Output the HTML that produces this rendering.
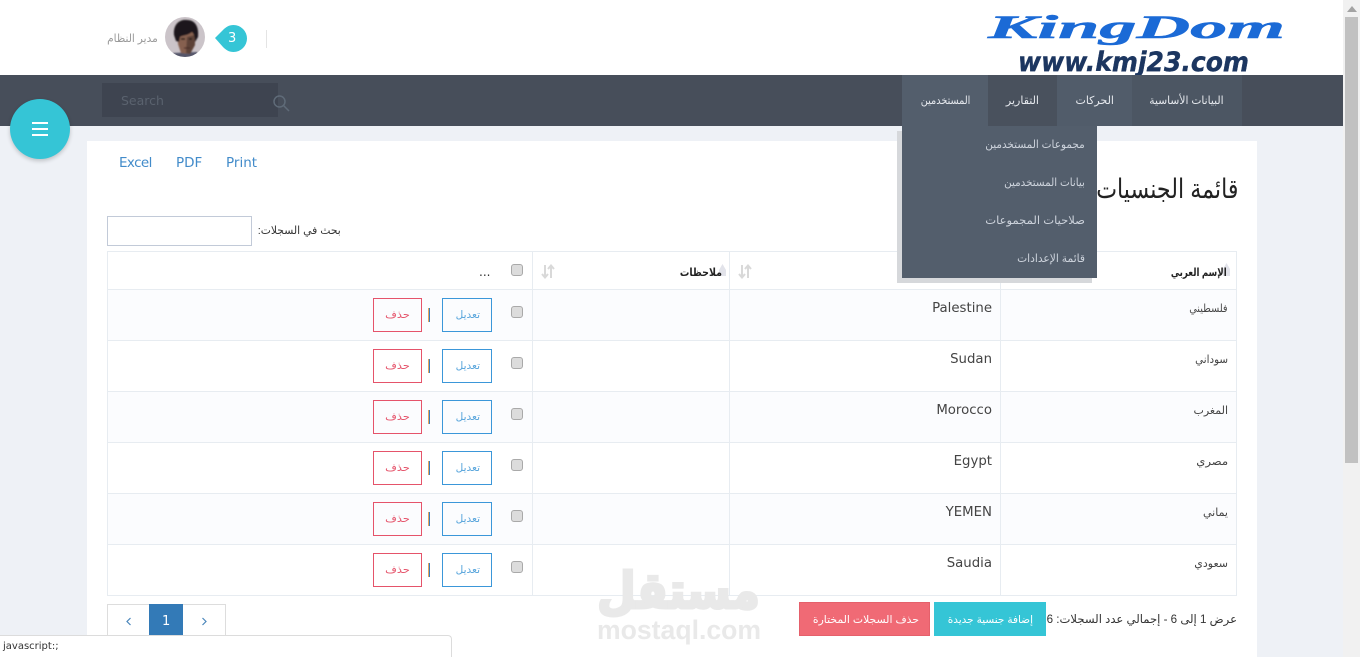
<!DOCTYPE html>
<html lang="ar"><head><meta charset="utf-8"><title>قائمة الجنسيات</title>
<style>
html,body{margin:0;padding:0;width:1360px;height:657px;overflow:hidden;background:#eef1f6;font-family:"Liberation Sans","DejaVu Sans",sans-serif}
div,span,a,svg{position:absolute;box-sizing:border-box}
#root{left:0;top:0;width:1360px;height:657px;overflow:hidden}
.t{white-space:nowrap;direction:rtl;transform-origin:right center;line-height:16px;text-decoration:none}
.l{white-space:nowrap;line-height:18px;font-family:"DejaVu Sans",sans-serif}
.nav{top:75px;height:51px}
.nt{color:#e6e9ee;font-size:11px;top:93px}
.dt{color:#cdd3dc;font-size:11px}
.row{left:107px;width:1130px;height:51px;border-bottom:1px solid #e7ecf1}
.v{top:251px;width:1px;height:345px;background:#e7ecf1}
.ar{font-size:11px;color:#444}
.en{font-size:13.3px;color:#444}
.cb{left:511px;width:12px;height:12px;background:#dcdcdc;border:1px solid #a9a9a9;border-radius:3px}
.be{left:442px;width:50px;height:34px;border:1px solid #3b97d9}
.bd{left:373px;width:49px;height:34px;border:1px solid #e5536a}
.sep{left:428px;width:2px;height:14px;background:linear-gradient(90deg,#e8a85a 50%,#3b7fc0 50%)}
.bt{font-size:10.5px}
</style></head><body>
<div id="root">

<!-- header -->
<div style="left:0;top:0;width:1343px;height:75px;background:#fff;overflow:hidden">
<svg style="left:980px;top:0" width="320" height="80" viewBox="0 0 320 80">
<text x="8" y="38" font-family="Liberation Serif" font-weight="bold" font-style="italic" font-size="33" fill="#1b6ad6" stroke="#1b6ad6" stroke-width=".5" textLength="297" lengthAdjust="spacingAndGlyphs">KingDom</text>
<text x="38" y="71" font-family="DejaVu Sans" font-weight="bold" font-style="italic" font-size="27" fill="#1c3660" stroke="#1c3660" stroke-width=".4" textLength="231" lengthAdjust="spacingAndGlyphs">www.kmj23.com</text>
</svg>
</div>
<span class="t" style="right:1202px;top:31px;font-size:11px;color:#9a9a9a;transform:scaleX(.96)">مدير النظام</span>
<svg style="left:165px;top:17px" width="40" height="40" viewBox="0 0 40 40">
<defs><clipPath id="c"><circle cx="20" cy="20" r="20"/></clipPath><filter id="b"><feGaussianBlur stdDeviation=".7"/></filter></defs>
<g clip-path="url(#c)"><rect width="40" height="40" fill="#cbc4c9"/>
<g filter="url(#b)">
<path d="M8 36 L32 35 L36 41 L6 41Z" fill="#55566a"/>
<path d="M13 15 L30 15 L30 28 L25 37 L16 36 L13 27Z" fill="#86604f"/>
<path d="M22 20 L30 18 L30 28 L25 37 L21 36Z" fill="#5d4238"/>
<path d="M9 18 C8 7 15 2 22 3 C31 3 34 11 33 20 L30 25 C30 20 29 17 27 15 C22 19 17 18 15 20 L14 25 L11 24Z" fill="#1e181b"/>
<path d="M16 22h4M24 22h3" stroke="#2a1c18" stroke-width="1.500"/>
<path d="M19 31h6" stroke="#4a2c26" stroke-width="1.200"/>
</g></g></svg>
<svg style="left:214px;top:24px" width="34" height="28" viewBox="0 0 34 28"><path d="M1 14 L9 6 C12 3 15 1 19.500 1 A13.500 13.500 0 0 1 19.500 28 C15 28 12 26 9 23Z" fill="#35c5d6"/></svg>
<span class="l" style="left:228px;top:30px;font-size:13px;color:#fff">3</span>
<div style="left:266px;top:30px;width:1px;height:18px;background:#e4e4e4"></div>

<!-- nav -->
<div style="left:0;top:75px;width:1343px;height:51px;background:#474e5a"></div>
<div class="nav" style="left:902px;width:86px;background:#535e6c"></div>
<div class="nav" style="left:988px;width:69px;background:#49515d"></div>
<div class="nav" style="left:1057px;width:75px;background:#515c6a"></div>
<div class="nav" style="left:1132px;width:110px;background:#4c5663"></div>
<span class="t nt" style="right:390px;transform:scaleX(.88)">المستخدمين</span>
<span class="t nt" style="right:321px">التقارير</span>
<span class="t nt" style="right:246px">الحركات</span>
<span class="t nt" style="right:136px;transform:scaleX(.97)">البيانات الأساسية</span>
<div style="left:102px;top:83px;width:176px;height:34px;background:#3e4450"></div>
<span class="l" style="left:121px;top:92px;font-size:12.500px;color:#5a626e">Search</span>
<svg style="left:272px;top:94px" width="18" height="18" viewBox="0 0 18 18"><circle cx="7.500" cy="7.500" r="5.500" fill="none" stroke="#5f6b78" stroke-width="1.500"/><path d="M11.500 11.500L17 17" stroke="#5f6b78" stroke-width="1.500"/></svg>

<!-- panel -->
<div style="left:87px;top:141px;width:1170px;height:516px;background:#fff"></div>
<span class="l" style="left:119px;top:154px;font-size:13.500px;color:#428bca;letter-spacing:-.6px">Excel</span>
<span class="l" style="left:176px;top:154px;font-size:13.500px;color:#428bca">PDF</span>
<span class="l" style="left:226px;top:154px;font-size:13.500px;color:#428bca">Print</span>
<span class="t" style="right:122px;top:173px;font-size:27px;line-height:32px;color:#222;transform:scaleX(.82)">قائمة الجنسيات</span>
<span class="t" style="right:1019px;top:223px;font-size:11px;color:#333;transform:scaleX(.98)">بحث في السجلات:</span>
<div style="left:107px;top:216px;width:145px;height:30px;border:1px solid #c2cad8;background:#fff"></div>

<!-- table -->
<div style="left:107px;top:251px;width:1130px;height:345px;border:1px solid #e7ecf1"></div>
<div class="row" style="top:251px;height:39px"></div>
<div class="row" style="top:290px;background:#fbfcfe"></div>
<div class="row" style="top:341px"></div>
<div class="row" style="top:392px;background:#fbfcfe"></div>
<div class="row" style="top:443px"></div>
<div class="row" style="top:494px;background:#fbfcfe"></div>
<div class="row" style="top:545px"></div>
<div style="left:107px;top:251px;width:1px;height:345px;background:#e7ecf1"></div>
<div style="left:1236px;top:251px;width:1px;height:345px;background:#e7ecf1"></div>
<div class="v" style="left:1000px"></div><div class="v" style="left:729px"></div><div class="v" style="left:532px"></div>

<svg style="left:1222px;top:263px" width="9" height="14" viewBox="0 0 9 14"><path d="M4.500 0L8 6V13H1V6Z" fill="#e2e3ea"/></svg>
<svg style="left:718px;top:264px" width="9" height="13" viewBox="0 0 9 13"><path d="M4.500 0L8 6V12H1V6Z" fill="#e2e3ea"/></svg>
<span class="t" style="right:133px;top:265px;font-size:11px;font-weight:bold;color:#222;transform:scaleX(.79)">الإسم العربي</span>
<span class="t" style="right:638px;top:265px;font-size:11px;font-weight:bold;color:#222;transform:scaleX(.86)">ملاحظات</span>
<span class="l" style="left:479px;top:263px;font-size:12px;color:#333">...</span>
<svg style="left:738px;top:264px" width="14" height="15" viewBox="0 0 14 15"><path d="M4 1v12M1 10l3 3.500 3-3.500M10 14V2M7 5l3-3.500 3 3.500" fill="none" stroke="#d9d9d9" stroke-width="2"/></svg>
<svg style="left:541px;top:264px" width="14" height="15" viewBox="0 0 14 15"><path d="M4 1v12M1 10l3 3.500 3-3.500M10 14V2M7 5l3-3.500 3 3.500" fill="none" stroke="#d9d9d9" stroke-width="2"/></svg>
<div class="cb" style="top:264px"></div>

<!-- row 1 -->
<span class="t ar" style="right:132px;top:301px;transform:scaleX(.88)">فلسطيني</span><span class="l en" style="right:368px;top:300px">Palestine</span>
<div class="cb" style="top:306px"></div><div class="be" style="top:298px"></div><div class="bd" style="top:298px"></div><div class="sep" style="top:308px"></div>
<span class="t bt" style="right:880px;top:307px;color:#5aa6dc">تعديل</span><span class="t bt" style="right:950px;top:307px;color:#e5536a;transform:scaleX(1.08)">حذف</span>
<!-- row 2 -->
<span class="t ar" style="right:132px;top:352px;transform:scaleX(.94)">سوداني</span><span class="l en" style="right:368px;top:351px">Sudan</span>
<div class="cb" style="top:357px"></div><div class="be" style="top:349px"></div><div class="bd" style="top:349px"></div><div class="sep" style="top:359px"></div>
<span class="t bt" style="right:880px;top:358px;color:#5aa6dc">تعديل</span><span class="t bt" style="right:950px;top:358px;color:#e5536a;transform:scaleX(1.08)">حذف</span>
<!-- row 3 -->
<span class="t ar" style="right:132px;top:403px">المغرب</span><span class="l en" style="right:368px;top:402px">Morocco</span>
<div class="cb" style="top:408px"></div><div class="be" style="top:400px"></div><div class="bd" style="top:400px"></div><div class="sep" style="top:410px"></div>
<span class="t bt" style="right:880px;top:409px;color:#5aa6dc">تعديل</span><span class="t bt" style="right:950px;top:409px;color:#e5536a;transform:scaleX(1.08)">حذف</span>
<!-- row 4 -->
<span class="t ar" style="right:132px;top:454px;transform:scaleX(1.06)">مصري</span><span class="l en" style="right:368px;top:453px">Egypt</span>
<div class="cb" style="top:459px"></div><div class="be" style="top:451px"></div><div class="bd" style="top:451px"></div><div class="sep" style="top:461px"></div>
<span class="t bt" style="right:880px;top:460px;color:#5aa6dc">تعديل</span><span class="t bt" style="right:950px;top:460px;color:#e5536a;transform:scaleX(1.08)">حذف</span>
<!-- row 5 -->
<span class="t ar" style="right:132px;top:505px">يماني</span><span class="l en" style="right:368px;top:504px">YEMEN</span>
<div class="cb" style="top:510px"></div><div class="be" style="top:502px"></div><div class="bd" style="top:502px"></div><div class="sep" style="top:512px"></div>
<span class="t bt" style="right:880px;top:511px;color:#5aa6dc">تعديل</span><span class="t bt" style="right:950px;top:511px;color:#e5536a;transform:scaleX(1.08)">حذف</span>
<!-- row 6 -->
<span class="t ar" style="right:132px;top:556px">سعودي</span><span class="l en" style="right:368px;top:555px">Saudia</span>
<div class="cb" style="top:561px"></div><div class="be" style="top:553px"></div><div class="bd" style="top:553px"></div><div class="sep" style="top:563px"></div>
<span class="t bt" style="right:880px;top:562px;color:#5aa6dc">تعديل</span><span class="t bt" style="right:950px;top:562px;color:#e5536a;transform:scaleX(1.08)">حذف</span>

<!-- dropdown -->
<div style="left:897px;top:131px;width:195px;height:152px;background:#d6d8db"></div>
<div style="left:902px;top:126px;width:195px;height:152px;background:#535e6c"></div>
<span class="t dt" style="right:275px;top:137px;transform:scaleX(.95)">مجموعات المستخدمين</span>
<span class="t dt" style="right:275px;top:175px;transform:scaleX(.94)">بيانات المستخدمين</span>
<span class="t dt" style="right:275px;top:213px;transform:scaleX(1.05)">صلاحيات المجموعات</span>
<span class="t dt" style="right:275px;top:251px;transform:scaleX(.97)">قائمة الإعدادات</span>

<!-- watermark -->
<span class="t" style="right:600px;top:561px;font-size:50px;line-height:60px;font-weight:bold;color:#e9e9e9;-webkit-text-stroke:3px #e9e9e9;transform:scaleX(.89)">مستقل</span>
<span class="l" style="left:597px;top:615px;font-size:26.600px;line-height:30px;font-family:'Liberation Sans';font-weight:bold;color:#e9e9e9">mostaql.com</span>

<!-- footer -->
<div style="left:799px;top:602px;width:131px;height:34px;background:#f06a75;border:1px solid #e5606b"></div>
<span class="t" style="right:441px;top:612px;font-size:10.500px;color:#fff;transform:scaleX(1.03)">حذف السجلات المختارة</span>
<div style="left:934px;top:602px;width:112px;height:34px;background:#35c5d6"></div>
<span class="t" style="right:327px;top:612px;font-size:10.500px;color:#fff">إضافة جنسية جديدة</span>
<span class="t" style="right:123px;top:612px;font-size:11.600px;color:#333">عرض 1 إلى 6 - إجمالي عدد السجلات: 6</span>

<!-- pagination -->
<div style="left:107px;top:604px;width:119px;height:34px;border:1px solid #ddd;background:#fff"></div>
<div style="left:149px;top:604px;width:34px;height:34px;background:#337ab7"></div>
<span class="l" style="left:162px;top:613px;font-size:13px;color:#fff">1</span>
<svg style="left:125px;top:617px" width="7" height="9" viewBox="0 0 7 9"><path d="M5.500 1L2 4.500 5.500 8" fill="none" stroke="#4a86bb" stroke-width="1.200"/></svg>
<svg style="left:201px;top:617px" width="7" height="9" viewBox="0 0 7 9"><path d="M1.500 1L5 4.500 1.500 8" fill="none" stroke="#4a86bb" stroke-width="1.200"/></svg>

<!-- floating button -->
<div style="left:10px;top:99px;width:60px;height:60px;border-radius:50%;background:#35c5d6;box-shadow:0 2px 4px rgba(0,0,0,.2)"></div>
<div style="left:32px;top:122px;width:16px;height:2px;background:#fff"></div>
<div style="left:32px;top:128px;width:16px;height:2px;background:#fff"></div>
<div style="left:32px;top:134px;width:16px;height:2px;background:#fff"></div>

<!-- status -->
<div style="left:-2px;top:635px;width:454px;height:22px;background:#fff;border:1px solid #dcdcdc;border-bottom:none;border-top-right-radius:4px"></div>
<span class="l" style="left:3px;top:638px;font-size:10px;line-height:18px;color:#333">javascript:;</span>

<!-- scrollbar -->
<div style="left:1343px;top:0;width:17px;height:657px;background:#f1f1f1"></div>
<div style="left:1345px;top:17px;width:13px;height:446px;background:#c1c1c1"></div>
<svg style="left:1347px;top:6px" width="10" height="6" viewBox="0 0 10 6"><path d="M5 0L10 6H0Z" fill="#a3a3a3"/></svg>
</div>
</body></html>
